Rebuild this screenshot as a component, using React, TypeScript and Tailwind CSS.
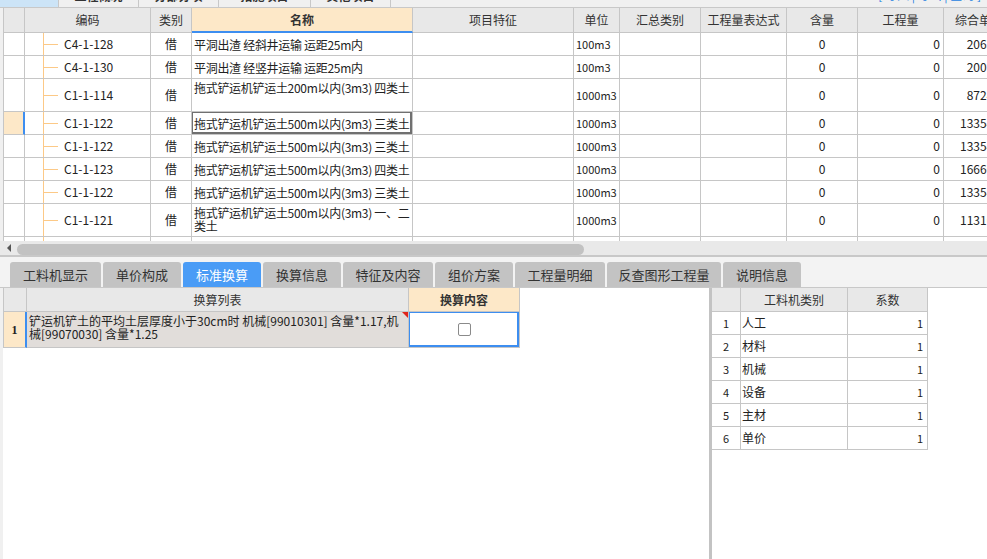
import React from 'react'

type Row = { code: string; name: string[]; unit: string; price: string; tall?: boolean; selected?: boolean }

const rows: Row[] = [
  { code: 'C4-1-128', name: ['平洞出渣 经斜井运输 运距25m内'], unit: '100m3', price: '2063.95' },
  { code: 'C4-1-130', name: ['平洞出渣 经竖井运输 运距25m内'], unit: '100m3', price: '2001.36' },
  { code: 'C1-1-114', name: ['拖式铲运机铲运土200m以内(3m3) 四类土'], unit: '1000m3', price: '8724.18', tall: true },
  { code: 'C1-1-122', name: ['拖式铲运机铲运土500m以内(3m3) 三类土'], unit: '1000m3', price: '13354.62', selected: true },
  { code: 'C1-1-122', name: ['拖式铲运机铲运土500m以内(3m3) 三类土'], unit: '1000m3', price: '13354.62' },
  { code: 'C1-1-123', name: ['拖式铲运机铲运土500m以内(3m3) 四类土'], unit: '1000m3', price: '16660.09' },
  { code: 'C1-1-122', name: ['拖式铲运机铲运土500m以内(3m3) 三类土'], unit: '1000m3', price: '13354.62' },
  { code: 'C1-1-121', name: ['拖式铲运机铲运土500m以内(3m3) 一、二', '类土'], unit: '1000m3', price: '11310.47', tall: true },
]

const tabs = [
  { label: '工料机显示', w: 'w-[91px]' },
  { label: '单价构成', w: 'w-[78px]' },
  { label: '标准换算', w: 'w-[78px]', active: true },
  { label: '换算信息', w: 'w-[78px]' },
  { label: '特征及内容', w: 'w-[90px]' },
  { label: '组价方案', w: 'w-[78px]' },
  { label: '工程量明细', w: 'w-[90px]' },
  { label: '反查图形工程量', w: 'w-[114px]' },
  { label: '说明信息', w: 'w-[78px]' },
]

const kinds = ['人工', '材料', '机械', '设备', '主材', '单价']

const cell = 'shrink-0 h-full border-r border-b border-[#c6c6c6] flex items-center overflow-hidden whitespace-nowrap'
const head = 'shrink-0 h-full border-r border-b border-[#c6c6c6] flex items-center justify-center bg-[#e8e8e8] text-[#333]'

function TopStrip() {
  return (
    <div className="flex h-[8px] border-b border-[#c8c8c8] overflow-hidden">
      <div className="w-[58px] bg-[#cce4f7]" />
      {['工程概况', '分部分项', '措施项目', '其他项目'].map((t, i) => (
        <div key={i} className={`${i === 2 ? 'w-[92px]' : 'w-[80px]'} border-l border-[#c8c8c8] flex justify-center`}>
          <span className="-mt-[11px] font-bold text-[12px] leading-[14px] text-[#333]">{t}</span>
        </div>
      ))}
      <div className="flex-1 border-l border-[#c8c8c8] flex justify-end pr-[6px]">
        <span className="-mt-[12px] text-[12px] leading-[14px] text-[#1f7fe0]">[ 导入 | 导出 | 查询 ]</span>
      </div>
    </div>
  )
}

function MainGrid() {
  return (
    <div className="h-[233px] overflow-hidden pl-[3px]">
      <div className="w-[1010px]">
        <div className="flex h-[25px]">
          <div className={`${head} w-[22px] border-l`} />
          <div className={`${head} w-[126px]`}>编码</div>
          <div className={`${head} w-[41px]`}>类别</div>
          <div className={`${head} w-[221px] bg-[#fde8c8] font-bold text-[#111] border-b-2 border-b-[#3d8ef0]`}>名称</div>
          <div className={`${head} w-[161px]`}>项目特征</div>
          <div className={`${head} w-[46px]`}>单位</div>
          <div className={`${head} w-[81px]`}>汇总类别</div>
          <div className={`${head} w-[86px]`}>工程量表达式</div>
          <div className={`${head} w-[71px]`}>含量</div>
          <div className={`${head} w-[86px]`}>工程量</div>
          <div className={`${head} w-[72px] justify-start pl-[11px]`}>综合单价</div>
        </div>
        {[...rows, null].map((r, i) => (
          <div key={i} className={`flex bg-white ${r?.tall ? 'h-[33px]' : 'h-[23px]'}`}>
            <div
              className={`${cell} w-[22px] border-l ${r?.selected ? 'bg-[#fde8c8] border-r-2 border-r-[#3d8ef0]' : ''}`}
            />
            <div className={`${cell} w-[126px] relative pl-[39px]`}>
              <div className="absolute left-[18px] top-0 bottom-0 w-px bg-[#fcc987]" />
              {r && <div className="absolute left-[19px] top-1/2 w-[14px] h-px bg-[#fcc987]" />}
              {r?.code}
            </div>
            <div className={`${cell} w-[41px] justify-center`}>{r && '借'}</div>
            <div
              className={`${cell} w-[221px] relative pl-[2px] ${r?.tall ? 'items-start pt-[2px]' : ''}`}
            >
              {r?.selected && <div className="absolute -top-px -left-px right-0 bottom-0 border-2 border-[#707070]" />}
              <div className="leading-[13px] text-[12px] tracking-[-0.3px]">
                {r?.name.map((l, j) => <div key={j}>{l}</div>)}
              </div>
            </div>
            <div className={`${cell} w-[161px]`} />
            <div className={`${cell} w-[46px] pl-[2px] text-[11px]`}>{r?.unit}</div>
            <div className={`${cell} w-[81px]`} />
            <div className={`${cell} w-[86px]`} />
            <div className={`${cell} w-[71px] justify-center`}>{r && '0'}</div>
            <div className={`${cell} w-[86px] justify-end pr-[3px]`}>{r && '0'}</div>
            <div className={`${cell} w-[72px] justify-end pr-[5px]`}>{r?.price}</div>
          </div>
        ))}
      </div>
    </div>
  )
}

function Scrollbar() {
  return (
    <div className="h-[14px] bg-[#e9e9e9] flex items-center pl-[7px]">
      <div className="w-0 h-0 border-y-[4px] border-y-transparent border-r-[4px] border-r-[#555]" />
      <div className="ml-[6px] mt-[2px] w-[567px] h-[11px] rounded-full bg-[#c2c2c2]" />
    </div>
  )
}

function Tabs() {
  return (
    <div className="h-[31px] bg-[#f3f3f3] pt-[5px] pl-[10px] flex gap-[2px] border-b border-[#c8c8c8]">
      {tabs.map(t => (
        <div
          key={t.label}
          className={`${t.w} h-[25px] rounded-t-[3px] flex items-center justify-center text-[13px] ${
            t.active ? 'bg-[#4a9cf6] text-white' : 'bg-[#c3c3c3] text-[#333]'
          }`}
        >
          {t.label}
        </div>
      ))}
    </div>
  )
}

function LeftPanel() {
  return (
    <div className="w-[709px] h-full pl-[3px] bg-[#f0f0f0]">
      <div className="h-full bg-white">
        <div className="flex h-[24px]">
          <div className={`${head} w-[24px] border-l`} />
          <div className={`${head} w-[382px]`}>换算列表</div>
          <div className={`${head} w-[111px] bg-[#fde8c8] font-bold text-[#111]`}>换算内容</div>
        </div>
        <div className="flex h-[36px]">
          <div className={`${cell} w-[24px] border-l justify-center bg-[#fde8c8] border-r-2 border-r-[#3d8ef0] font-bold font-['Liberation_Serif',serif]`}>
            1
          </div>
          <div className={`${cell} w-[382px] relative items-start pt-[2px] pl-[2px] bg-[#e1ddda]`}>
            <div className="absolute top-0 right-0 w-0 h-0 border-t-[6px] border-t-[#e0251b] border-l-[6px] border-l-transparent" />
            <div className="leading-[13px]">
              <div>铲运机铲土的平均土层厚度小于30cm时 机械[99010301] 含量*1.17,机</div>
              <div>械[99070030] 含量*1.25</div>
            </div>
          </div>
          <div className={`${cell} w-[111px] relative justify-center`}>
            <div className="absolute -top-px -left-px right-0 bottom-0 border-2 border-[#3d8ef0]" />
            <div className="w-[13px] h-[13px] rounded-[2px] border border-[#8a8a8a] bg-white" />
          </div>
        </div>
      </div>
    </div>
  )
}

function RightPanel() {
  return (
    <div className="flex-1 h-full bg-white">
      <div className="flex h-[24px]">
        <div className={`${head} w-[29px]`} />
        <div className={`${head} w-[107px]`}>工料机类别</div>
        <div className={`${head} w-[80px]`}>系数</div>
      </div>
      {kinds.map((k, i) => (
        <div key={k} className="flex h-[23px]">
          <div className={`${cell} w-[29px] justify-center text-[11px]`}>{i + 1}</div>
          <div className={`${cell} w-[107px] pl-[1px]`}>{k}</div>
          <div className={`${cell} w-[80px] justify-end pr-[4px] text-[11px]`}>1</div>
        </div>
      ))}
    </div>
  )
}

export default function App() {
  return (
    <div className="w-[987px] h-[559px] overflow-hidden bg-[#f0f0f0] text-[12px] text-[#222] font-['Noto_Sans_CJK_SC',sans-serif]">
      <TopStrip />
      <MainGrid />
      <Scrollbar />
      <div className="h-[2px] bg-[#c8c8c8]" />
      <Tabs />
      <div className="flex h-[271px]">
        <LeftPanel />
        <div className="w-[3px] h-full bg-[#c3c3c3]" />
        <RightPanel />
      </div>
    </div>
  )
}
